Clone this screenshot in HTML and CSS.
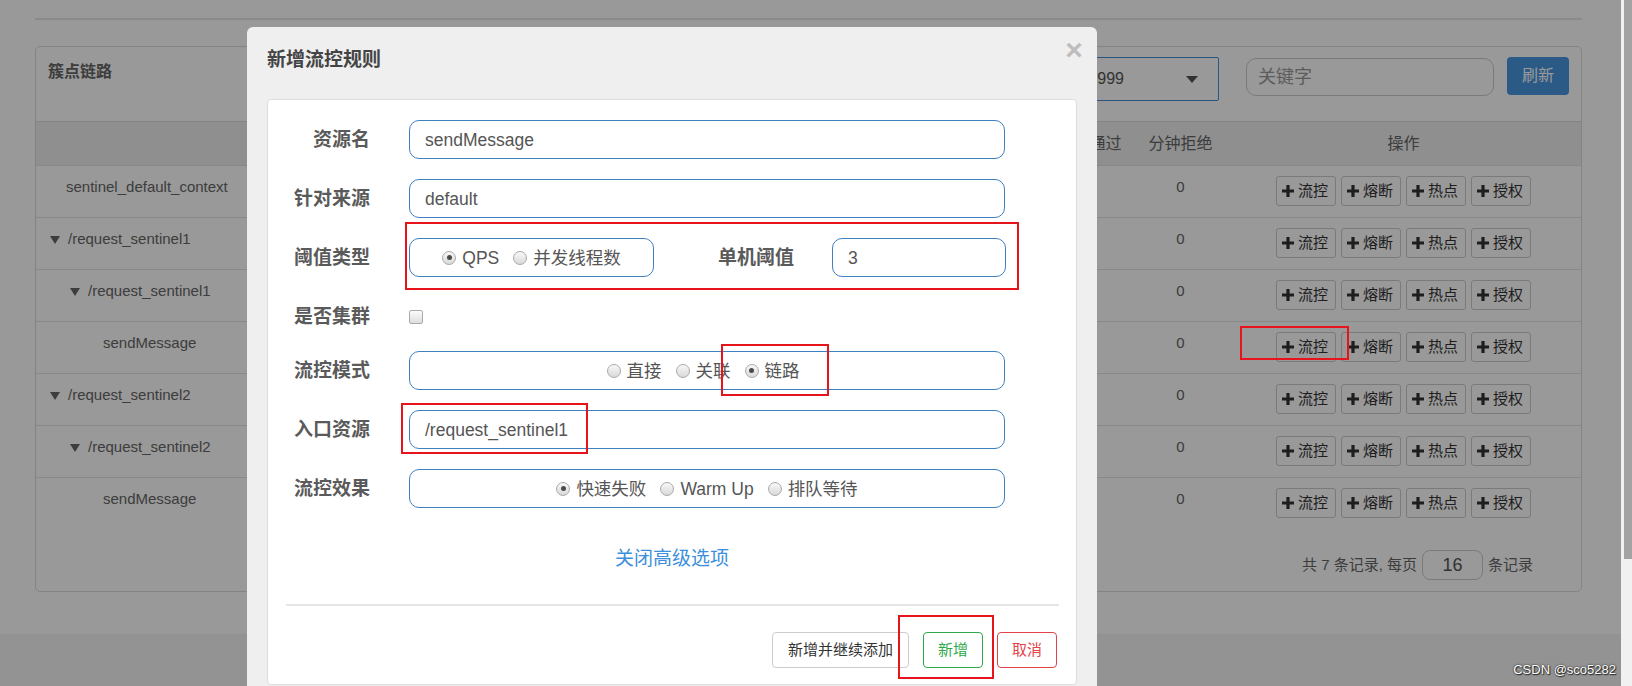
FILE: index.html
```html
<!DOCTYPE html>
<html lang="zh-CN">
<head>
<meta charset="utf-8">
<title>新增流控规则</title>
<link rel="stylesheet" href="styles.css">
</head>
<body>
<div class="page">
  <div class="main">
    <div class="topline"></div>
    <div class="card">
      <div class="card-head">
        <div class="card-title">簇点链路</div>
        <div class="tools">
          <div class="select"><span class="select-text">192.168.1.103:8999</span><span class="caret"></span></div>
          <div class="search">关键字</div>
          <div class="btn-refresh">刷新</div>
        </div>
      </div>
      <table class="grid">
        <colgroup>
          <col class="c-name"><col class="c-m"><col class="c-m"><col class="c-m"><col class="c-m"><col class="c-s"><col class="c-s"><col class="c-op">
        </colgroup>
        <thead>
          <tr><th>资源名</th><th>通过QPS</th><th>拒绝QPS</th><th>并发数</th><th>平均RT</th><th>分钟通过</th><th>分钟拒绝</th><th>操作</th></tr>
        </thead>
        <tbody>
          <tr><td class="name l1">sentinel_default_context</td><td></td><td></td><td></td><td></td><td></td><td>0</td>
            <td><div class="ops"><span class="b"><svg class="plus" viewBox="0 0 12 12"><path d="M4.4 0h3.2v4.4H12v3.2H7.6V12H4.4V7.6H0V4.4h4.4z"/></svg>流控</span><span class="b"><svg class="plus" viewBox="0 0 12 12"><path d="M4.4 0h3.2v4.4H12v3.2H7.6V12H4.4V7.6H0V4.4h4.4z"/></svg>熔断</span><span class="b"><svg class="plus" viewBox="0 0 12 12"><path d="M4.4 0h3.2v4.4H12v3.2H7.6V12H4.4V7.6H0V4.4h4.4z"/></svg>热点</span><span class="b"><svg class="plus" viewBox="0 0 12 12"><path d="M4.4 0h3.2v4.4H12v3.2H7.6V12H4.4V7.6H0V4.4h4.4z"/></svg>授权</span></div></td></tr>
          <tr><td class="name t1"><span class="tri"></span>/request_sentinel1</td><td></td><td></td><td></td><td></td><td></td><td>0</td>
            <td><div class="ops"><span class="b"><svg class="plus" viewBox="0 0 12 12"><path d="M4.4 0h3.2v4.4H12v3.2H7.6V12H4.4V7.6H0V4.4h4.4z"/></svg>流控</span><span class="b"><svg class="plus" viewBox="0 0 12 12"><path d="M4.4 0h3.2v4.4H12v3.2H7.6V12H4.4V7.6H0V4.4h4.4z"/></svg>熔断</span><span class="b"><svg class="plus" viewBox="0 0 12 12"><path d="M4.4 0h3.2v4.4H12v3.2H7.6V12H4.4V7.6H0V4.4h4.4z"/></svg>热点</span><span class="b"><svg class="plus" viewBox="0 0 12 12"><path d="M4.4 0h3.2v4.4H12v3.2H7.6V12H4.4V7.6H0V4.4h4.4z"/></svg>授权</span></div></td></tr>
          <tr><td class="name t2"><span class="tri"></span>/request_sentinel1</td><td></td><td></td><td></td><td></td><td></td><td>0</td>
            <td><div class="ops"><span class="b"><svg class="plus" viewBox="0 0 12 12"><path d="M4.4 0h3.2v4.4H12v3.2H7.6V12H4.4V7.6H0V4.4h4.4z"/></svg>流控</span><span class="b"><svg class="plus" viewBox="0 0 12 12"><path d="M4.4 0h3.2v4.4H12v3.2H7.6V12H4.4V7.6H0V4.4h4.4z"/></svg>熔断</span><span class="b"><svg class="plus" viewBox="0 0 12 12"><path d="M4.4 0h3.2v4.4H12v3.2H7.6V12H4.4V7.6H0V4.4h4.4z"/></svg>热点</span><span class="b"><svg class="plus" viewBox="0 0 12 12"><path d="M4.4 0h3.2v4.4H12v3.2H7.6V12H4.4V7.6H0V4.4h4.4z"/></svg>授权</span></div></td></tr>
          <tr><td class="name l3">sendMessage</td><td></td><td></td><td></td><td></td><td></td><td>0</td>
            <td><div class="ops"><span class="b"><svg class="plus" viewBox="0 0 12 12"><path d="M4.4 0h3.2v4.4H12v3.2H7.6V12H4.4V7.6H0V4.4h4.4z"/></svg>流控</span><span class="b"><svg class="plus" viewBox="0 0 12 12"><path d="M4.4 0h3.2v4.4H12v3.2H7.6V12H4.4V7.6H0V4.4h4.4z"/></svg>熔断</span><span class="b"><svg class="plus" viewBox="0 0 12 12"><path d="M4.4 0h3.2v4.4H12v3.2H7.6V12H4.4V7.6H0V4.4h4.4z"/></svg>热点</span><span class="b"><svg class="plus" viewBox="0 0 12 12"><path d="M4.4 0h3.2v4.4H12v3.2H7.6V12H4.4V7.6H0V4.4h4.4z"/></svg>授权</span></div></td></tr>
          <tr><td class="name t1"><span class="tri"></span>/request_sentinel2</td><td></td><td></td><td></td><td></td><td></td><td>0</td>
            <td><div class="ops"><span class="b"><svg class="plus" viewBox="0 0 12 12"><path d="M4.4 0h3.2v4.4H12v3.2H7.6V12H4.4V7.6H0V4.4h4.4z"/></svg>流控</span><span class="b"><svg class="plus" viewBox="0 0 12 12"><path d="M4.4 0h3.2v4.4H12v3.2H7.6V12H4.4V7.6H0V4.4h4.4z"/></svg>熔断</span><span class="b"><svg class="plus" viewBox="0 0 12 12"><path d="M4.4 0h3.2v4.4H12v3.2H7.6V12H4.4V7.6H0V4.4h4.4z"/></svg>热点</span><span class="b"><svg class="plus" viewBox="0 0 12 12"><path d="M4.4 0h3.2v4.4H12v3.2H7.6V12H4.4V7.6H0V4.4h4.4z"/></svg>授权</span></div></td></tr>
          <tr><td class="name t2"><span class="tri"></span>/request_sentinel2</td><td></td><td></td><td></td><td></td><td></td><td>0</td>
            <td><div class="ops"><span class="b"><svg class="plus" viewBox="0 0 12 12"><path d="M4.4 0h3.2v4.4H12v3.2H7.6V12H4.4V7.6H0V4.4h4.4z"/></svg>流控</span><span class="b"><svg class="plus" viewBox="0 0 12 12"><path d="M4.4 0h3.2v4.4H12v3.2H7.6V12H4.4V7.6H0V4.4h4.4z"/></svg>熔断</span><span class="b"><svg class="plus" viewBox="0 0 12 12"><path d="M4.4 0h3.2v4.4H12v3.2H7.6V12H4.4V7.6H0V4.4h4.4z"/></svg>热点</span><span class="b"><svg class="plus" viewBox="0 0 12 12"><path d="M4.4 0h3.2v4.4H12v3.2H7.6V12H4.4V7.6H0V4.4h4.4z"/></svg>授权</span></div></td></tr>
          <tr><td class="name l3">sendMessage</td><td></td><td></td><td></td><td></td><td></td><td>0</td>
            <td><div class="ops"><span class="b"><svg class="plus" viewBox="0 0 12 12"><path d="M4.4 0h3.2v4.4H12v3.2H7.6V12H4.4V7.6H0V4.4h4.4z"/></svg>流控</span><span class="b"><svg class="plus" viewBox="0 0 12 12"><path d="M4.4 0h3.2v4.4H12v3.2H7.6V12H4.4V7.6H0V4.4h4.4z"/></svg>熔断</span><span class="b"><svg class="plus" viewBox="0 0 12 12"><path d="M4.4 0h3.2v4.4H12v3.2H7.6V12H4.4V7.6H0V4.4h4.4z"/></svg>热点</span><span class="b"><svg class="plus" viewBox="0 0 12 12"><path d="M4.4 0h3.2v4.4H12v3.2H7.6V12H4.4V7.6H0V4.4h4.4z"/></svg>授权</span></div></td></tr>
        </tbody>
      </table>
      <div class="pager"><span>共 7 条记录, 每页</span><span class="pager-input">16</span><span>条记录</span></div>
    </div>
    <div class="footer"></div>

    <div class="backdrop"></div>

    <div class="modal">
      <div class="close">×</div>
      <div class="modal-title">新增流控规则</div>
      <div class="panel">
        <div class="row">
          <div class="label">资源名</div>
          <div class="input grow">sendMessage</div>
        </div>
        <div class="row">
          <div class="label">针对来源</div>
          <div class="input grow">default</div>
        </div>
        <div class="row">
          <div class="label">阈值类型</div>
          <div class="input boxed type-box">
            <span class="radio"><i class="dot on"></i>QPS</span>
            <span class="radio"><i class="dot"></i>并发线程数</span>
          </div>
          <div class="label label-inline">单机阈值</div>
          <div class="input grow">3</div>
        </div>
        <div class="row row-check">
          <div class="label">是否集群</div>
          <span class="checkbox"></span>
        </div>
        <div class="row row-after-check">
          <div class="label">流控模式</div>
          <div class="input boxed grow mode-box">
            <span class="radio"><i class="dot"></i>直接</span>
            <span class="radio"><i class="dot"></i>关联</span>
            <span class="radio"><i class="dot on"></i>链路</span>
          </div>
        </div>
        <div class="row">
          <div class="label">入口资源</div>
          <div class="input grow">/request_sentinel1</div>
        </div>
        <div class="row">
          <div class="label">流控效果</div>
          <div class="input boxed grow">
            <span class="radio"><i class="dot on"></i>快速失败</span>
            <span class="radio"><i class="dot"></i>Warm Up</span>
            <span class="radio"><i class="dot"></i>排队等待</span>
          </div>
        </div>
        <div class="adv-link">关闭高级选项</div>
        <div class="sep"></div>
        <div class="actions">
          <span class="btn btn-default">新增并继续添加</span>
          <span class="btn btn-ok">新增</span>
          <span class="btn btn-cancel">取消</span>
        </div>
      </div>
    </div>

    <div class="mark m1"></div>
    <div class="mark m2"></div>
    <div class="mark m3"></div>
    <div class="mark m4"></div>
    <div class="mark m5"></div>

    <div class="watermark">CSDN @sco5282</div>
  </div>
  <div class="scrollbar"><div class="thumb"></div></div>
</div>
</body>
</html>
```

FILE: styles.css
```css
* { box-sizing: border-box; }
html, body { margin: 0; padding: 0; }
body {
  width: 1632px;
  height: 686px;
  overflow: hidden;
  font-family: "Liberation Sans", "Noto Sans CJK SC", sans-serif;
  background: #f1f1f1;
}
.page { display: flex; height: 686px; }
.main {
  position: relative;
  width: 1621px;
  height: 686px;
  overflow: hidden;
  background: #fff;
  display: flex;
  flex-direction: column;
}
.scrollbar { width: 11px; background: #f1f1f1; }
.thumb { margin-left: 3px; width: 8px; height: 559px; background: #a3a3a3; }

.topline { margin: 18px 39px 0 35px; height: 2px; background: #e6e6e6; flex: none; }

.card {
  flex: none;
  margin: 26px 39px 0 35px;
  border: 1px solid #ddd;
  border-radius: 5px;
  background: #fff;
}
.card-head {
  height: 75px;
  border-bottom: 1px solid #ddd;
  padding: 10px 12px 0 12px;
  display: flex;
  justify-content: space-between;
  align-items: flex-start;
}
.card-title { margin-top: 4px; font-size: 16px; line-height: 22px; font-weight: bold; color: #666; }
.tools { display: flex; align-items: flex-start; }
.select {
  width: 300px;
  height: 44px;
  border: 1px solid #4590d8;
  border-radius: 2px;
  display: flex;
  align-items: center;
  justify-content: flex-end;
  padding: 0 20px 0 0;
  font-size: 16px;
  line-height: 22px;
  color: #555;
  margin-right: 27px;
  white-space: nowrap;
}
.caret {
  flex: none;
  margin-left: 62px;
  width: 0; height: 0;
  border-left: 6px solid transparent;
  border-right: 6px solid transparent;
  border-top: 7px solid #555;
}
.search {
  width: 248px;
  height: 38px;
  margin-top: 1px;
  border: 1px solid #ccc;
  border-radius: 10px;
  padding-left: 11px;
  font-size: 18px;
  line-height: 36px;
  color: #999;
  margin-right: 13px;
}
.btn-refresh {
  width: 62px;
  height: 38px;
  border-radius: 4px;
  background: #4896df;
  color: #fff;
  font-size: 16px;
  line-height: 38px;
  text-align: center;
}

.grid { width: 100%; table-layout: fixed; border-collapse: separate; border-spacing: 0; }
.c-name { width: 480px; }
.c-m { width: 132px; }
.c-s { width: 91px; }
.c-op { width: 355px; }
.grid th {
  font-weight: normal;
  font-size: 16px;
  line-height: 22px;
  color: #666;
  background: #eee;
  padding: 11px 8px 10px;
  text-align: center;
  white-space: nowrap;
  overflow: hidden;
}
.grid td {
  font-size: 15px;
  line-height: 22px;
  color: #666;
  padding: 10px 8px 11px;
  border-top: 1px solid #e3e3e3;
  vertical-align: top;
  text-align: center;
  white-space: nowrap;
}
.grid td.name { text-align: left; }
.grid td.l1 { padding-left: 30px; }
.grid td.t1 { padding-left: 14px; }
.grid td.t2 { padding-left: 34px; }
.grid td.l3 { padding-left: 67px; }
.tri {
  display: inline-block;
  width: 0; height: 0;
  border-left: 5.5px solid transparent;
  border-right: 5.5px solid transparent;
  border-top: 8px solid #666;
  margin-right: 8px;
  vertical-align: middle;
}
.ops { display: flex; justify-content: center; gap: 5px; }
.b {
  display: inline-flex;
  align-items: center;
  height: 30px;
  padding: 0 7px 0 5px;
  border: 1px solid #ccc;
  border-radius: 3px;
  background: #fff;
  color: #333;
  font-size: 15px;
  line-height: 20px;
}
.plus { width: 12px; height: 12px; fill: #333; margin-right: 4px; flex: none; }

.pager {
  display: flex;
  justify-content: flex-end;
  align-items: center;
  gap: 5px;
  padding: 21px 48px 11px 0;
  font-size: 15px;
  line-height: 20px;
  color: #666;
}
.pager-input {
  width: 61px;
  height: 30px;
  border: 1px solid #ccc;
  border-radius: 8px;
  text-align: center;
  font-size: 18px;
  line-height: 28px;
  color: #555;
}

.footer { margin-top: 42px; flex: 1; background: #f5f5f5; }

.backdrop { position: absolute; inset: 0; background: rgba(0, 0, 0, 0.4); z-index: 10; }

.modal {
  position: absolute;
  left: 247px;
  top: 27px;
  width: 850px;
  height: 700px;
  background: #efefef;
  border-radius: 6px;
  padding: 20px 20px 0;
  z-index: 20;
}
.close {
  position: absolute;
  right: 12px;
  top: 8px;
  width: 22px;
  height: 30px;
  font-size: 30px;
  line-height: 30px;
  font-weight: bold;
  color: #bdbdbd;
  text-align: center;
}
.modal-title {
  font-size: 19px;
  line-height: 26px;
  font-weight: bold;
  color: #444;
  margin-bottom: 26px;
}
.panel {
  height: 586px;
  background: #fff;
  border: 1px solid #ddd;
  border-radius: 4px;
  display: flex;
  flex-direction: column;
}
.row { display: flex; align-items: center; height: 39px; margin-top: 20px; }
.row-check { height: 36px; margin-top: 22px; }
.row-after-check { margin-top: 16px; }
.label {
  width: 102px;
  margin-right: 39px;
  text-align: right;
  font-size: 19px;
  line-height: 26px;
  font-weight: bold;
  color: #5a5a5a;
  flex: none;
}
.label-inline { width: 77px; margin: 0 37px 0 64px; text-align: left; }
.input {
  height: 39px;
  border: 1px solid #3f80c0;
  border-radius: 10px;
  padding: 0 15px;
  display: flex;
  align-items: center;
  font-size: 17.5px;
  line-height: 22px;
  color: #555;
}
.grow { flex: none; width: 596px; }
.row .label-inline + .grow { width: 174px; }
.boxed { justify-content: center; gap: 14px; }
.mode-box { padding-right: 23px; }
.type-box { width: 245px; flex: none; }
.radio { display: inline-flex; align-items: center; white-space: nowrap; line-height: 22px; }
.dot {
  position: relative;
  width: 14px;
  height: 14px;
  border-radius: 50%;
  border: 1px solid #a9a9a9;
  background: linear-gradient(#f8f8f8, #d9d9d9);
  margin-right: 6px;
  flex: none;
}
.dot.on::after {
  content: "";
  position: absolute;
  left: 3.5px;
  top: 3.5px;
  width: 5px;
  height: 5px;
  border-radius: 50%;
  background: #4a4a4a;
}
.checkbox {
  width: 14px;
  height: 14px;
  border: 1px solid #a9a9a9;
  border-radius: 2px;
  background: linear-gradient(#fbfbfb, #dedede);
}
.adv-link {
  margin-top: 37px;
  text-align: center;
  font-size: 19px;
  line-height: 28px;
  color: #3c8fdc;
}
.sep { margin: 31px 17px 0 18px; height: 2px; background: #e5e5e5; }
.actions { display: flex; justify-content: flex-end; gap: 14px; margin: 26px 19px 0 0; }
.btn {
  height: 36px;
  padding: 0 14px;
  border: 1px solid #ccc;
  border-radius: 4px;
  font-size: 15px;
  line-height: 34px;
  color: #333;
  background: #fff;
}
.btn-default { padding: 0 15px; }
.btn-ok { border-color: #2eaa4a; color: #2eaa4a; }
.btn-cancel { border-color: #e5414a; color: #e5414a; }

.mark { position: absolute; border: 2px solid #e8141c; z-index: 40; }
.m1 { left: 405px; top: 222px; width: 614px; height: 68px; }
.m2 { left: 721px; top: 344px; width: 108px; height: 52px; }
.m3 { left: 401px; top: 403px; width: 187px; height: 51px; }
.m4 { left: 898px; top: 615px; width: 96px; height: 64px; }
.m5 { left: 1240px; top: 326px; width: 109px; height: 34px; }

.watermark {
  position: absolute;
  right: 5px;
  top: 662px;
  z-index: 50;
  font-size: 13px;
  line-height: 16px;
  color: #fff;
  text-shadow: 0 0 2px #000, 1px 1px 1px #333;
}
```
